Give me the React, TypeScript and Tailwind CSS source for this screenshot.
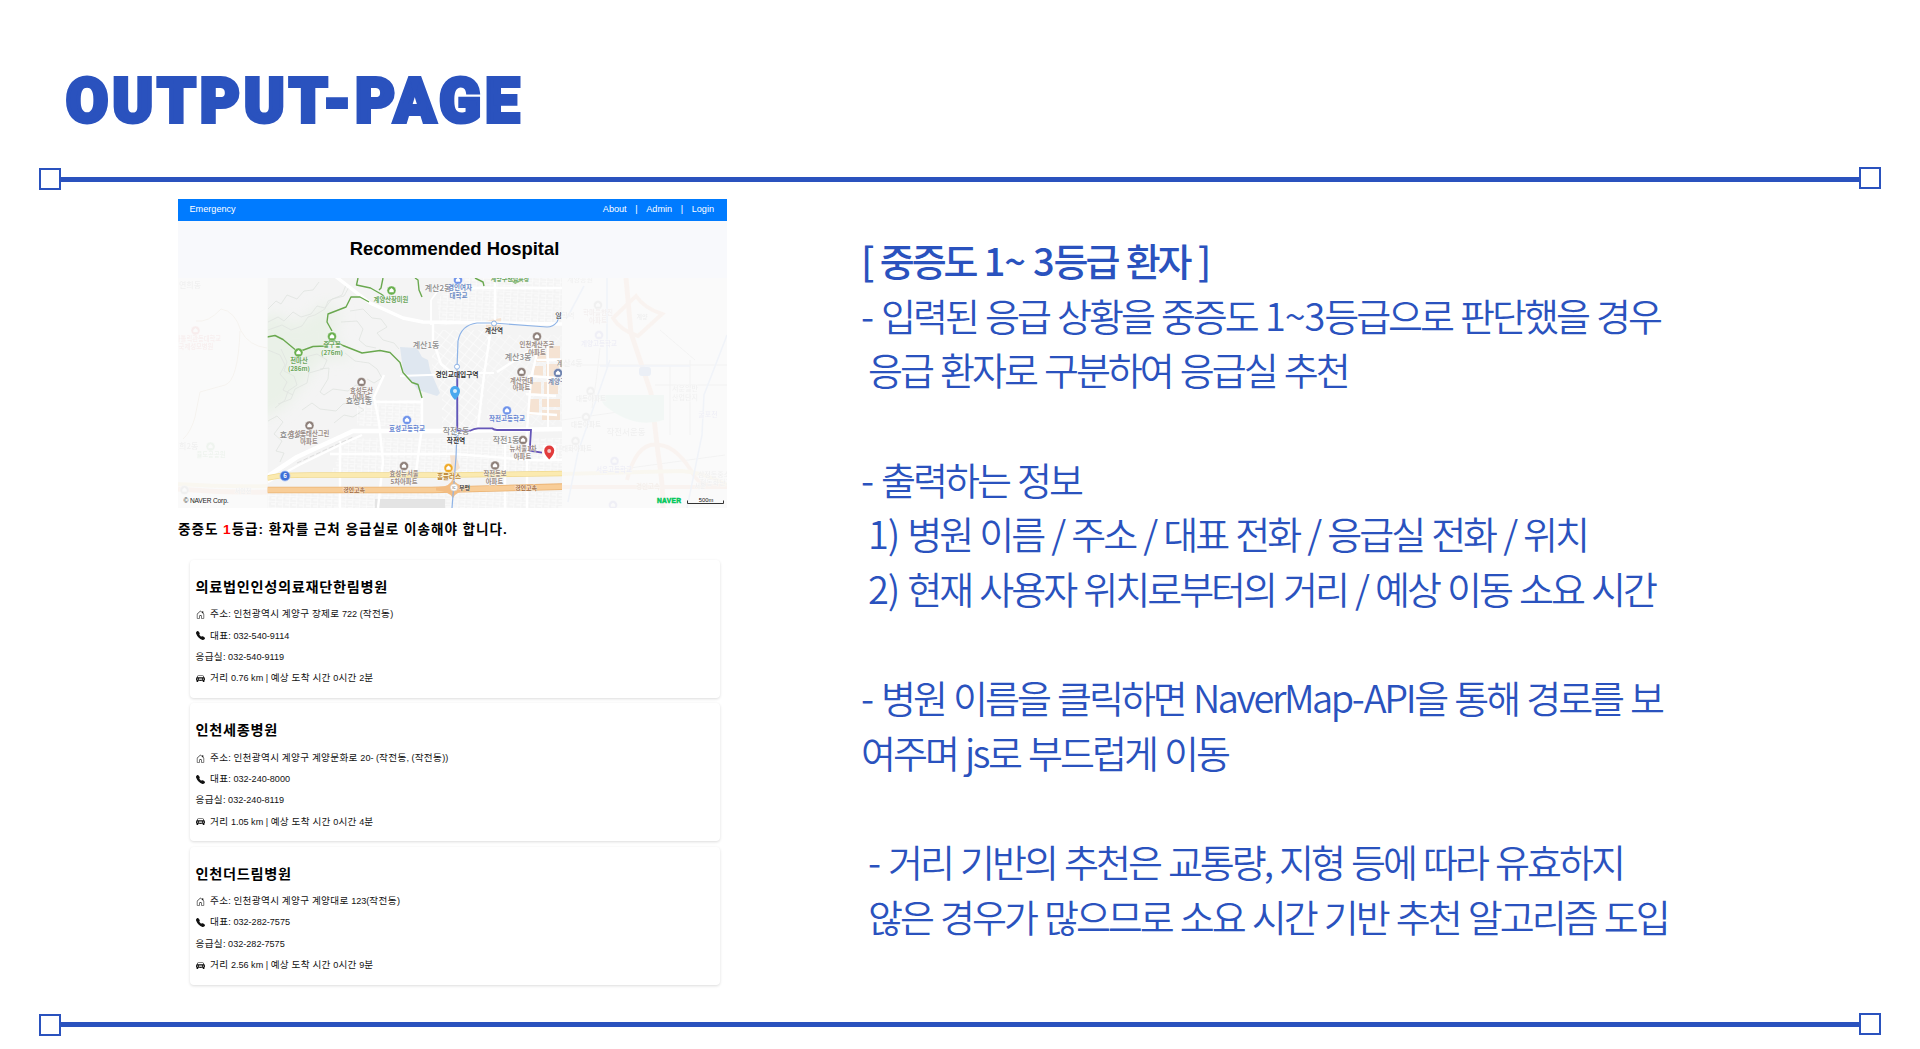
import { clsx } from "clsx";
import { BsCarFrontFill, BsHouseDoor, BsTelephoneFill } from "react-icons/bs";

const hospitals = [
  {
    name: "의료법인인성의료재단한림병원",
    address: "인천광역시 계양구 장제로 722 (작전동)",
    phone: "032-540-9114",
    emergency: "032-540-9119",
    distance: "0.76",
    minutes: 2,
  },
  {
    name: "인천세종병원",
    address: "인천광역시 계양구 계양문화로 20- (작전동, (작전동))",
    phone: "032-240-8000",
    emergency: "032-240-8119",
    distance: "1.05",
    minutes: 4,
  },
  {
    name: "인천더드림병원",
    address: "인천광역시 계양구 계양대로 123(작전동)",
    phone: "032-282-7575",
    emergency: "032-282-7575",
    distance: "2.56",
    minutes: 9,
  },
];

const notes = [
  { text: "[ 중증도 1~ 3등급 환자 ]", className: "font-medium" },
  { text: "- 입력된 응급 상황을 중증도 1~3등급으로 판단했을 경우", className: "" },
  { text: "응급 환자로 구분하여 응급실 추천", className: "pl-[7px]" },
  { text: "", className: "" },
  { text: "- 출력하는 정보", className: "" },
  { text: "1) 병원 이름 / 주소 / 대표 전화 / 응급실 전화 / 위치", className: "pl-[7px]" },
  { text: "2) 현재 사용자 위치로부터의 거리 / 예상 이동 소요 시간", className: "pl-[7px]" },
  { text: "", className: "" },
  { text: "- 병원 이름을 클릭하면 NaverMap-API을 통해 경로를 보", className: "" },
  { text: "여주며 js로 부드럽게 이동", className: "" },
  { text: "", className: "" },
  { text: "- 거리 기반의 추천은 교통량, 지형 등에 따라 유효하지", className: "pl-[7px]" },
  { text: "않은 경우가 많으므로 소요 시간 기반 추천 알고리즘 도입", className: "pl-[7px]" },
];

// [x, y, text, fill, size]
type Label = [number, number, string, string, number];

const labels: Label[] = [
  [391, 301.5, "계양산장미원", "#6aa55b", 6.3],
  [332, 347, "중구봉", "#6aa55b", 6.3],
  [332, 355, "(276m)", "#6aa55b", 6.3],
  [299, 363, "천마산", "#6aa55b", 6.3],
  [299, 371, "(286m)", "#6aa55b", 6.3],
  [510, 281, "계양구산림욕장", "#6aa55b", 6],
  [438, 291, "계산2동", "#8b8b8b", 8],
  [460, 290, "경인여자", "#6c8bc4", 6.5],
  [458.5, 298, "대학교", "#6c8bc4", 6.5],
  [426, 348, "계산1동", "#8b8b8b", 8],
  [494, 333, "계산역", "#444", 6.5],
  [558.5, 318, "임", "#444", 7],
  [537, 347, "인천계산주공", "#9a8c86", 6.3],
  [537, 355, "아파트", "#9a8c86", 6.3],
  [518, 360, "계산3동", "#8b8b8b", 8],
  [565, 366, "계산4", "#8b8b8b", 7],
  [457, 376.5, "경인교대입구역", "#333", 6.7],
  [521.5, 382.5, "계산현대", "#9a8c86", 6.3],
  [521.5, 390, "아파트", "#9a8c86", 6.3],
  [560, 384, "계양구청", "#7c8cae", 6.5],
  [361.5, 392.5, "효성두산", "#9a8c86", 6.3],
  [361.5, 400, "아파트", "#9a8c86", 6.3],
  [359, 404, "효성1동", "#8b8b8b", 8],
  [407, 430.5, "효성고등학교", "#6686d2", 6.5],
  [293, 438, "효성2동", "#8b8b8b", 8],
  [309, 436, "효성동태산그린", "#9a8c86", 6.3],
  [309, 443.5, "아파트", "#9a8c86", 6.3],
  [507, 421, "작전고등학교", "#6686d2", 6.5],
  [456, 433.5, "작전2동", "#8b8b8b", 8],
  [456, 443, "작전역", "#333", 6.7],
  [506, 442.5, "작전1동", "#8b8b8b", 8],
  [523, 450.5, "뉴서울1차", "#9a8c86", 6.3],
  [522.5, 458.5, "아파트", "#9a8c86", 6.3],
  [404, 476, "효성뉴서울", "#9a8c86", 6.3],
  [404, 484, "5차아파트", "#9a8c86", 6.3],
  [449, 478.5, "홈플러스", "#b98533", 6.5],
  [495, 476, "작전동보", "#9a8c86", 6.3],
  [494.5, 483.5, "아파트", "#9a8c86", 6.3],
  [354, 492, "경인고속", "#a0673a", 6],
  [526, 490, "경인고속", "#a0673a", 6],
  [464.5, 490, "부평", "#444", 6],
];

const fadedLabels: Label[] = [
  [190, 288, "연희동", "#777", 8],
  [198, 341, "가톨릭관동대학교", "#d66", 6.3],
  [196, 349, "국제성모병원", "#d66", 6.3],
  [185, 449, "연희2동", "#777", 8],
  [211, 457, "율도공공원", "#6a6", 6.3],
  [243, 493, "서인천", "#777", 6],
  [580, 282, "계양공원", "#777", 7],
  [568, 318, "학역", "#777", 7],
  [598, 315, "학마을한진", "#a77", 6.5],
  [598, 322.5, "아파트", "#a77", 6.5],
  [642, 319, "계양", "#777", 6],
  [599, 346, "계양고등학교", "#66c", 6.5],
  [573, 366, "산4동", "#777", 8],
  [591, 401, "대동아파트", "#777", 6.5],
  [586, 427, "대동아파트", "#777", 6.5],
  [577, 451, "태화아파트", "#777", 6.5],
  [626, 435, "작전서운동", "#777", 8.5],
  [614, 472, "서운고등학교", "#66c", 6.5],
  [685, 391, "서운일반", "#777", 7],
  [685, 399.5, "산업단지", "#777", 7],
  [708, 417, "굴포천", "#66c", 7],
  [714, 477, "삼정동중소", "#777", 7],
  [716, 485, "협동화단지", "#777", 7],
  [648, 489, "경인고속", "#a63", 6.5],
  [700, 488, "서운", "#777", 6],
];

// [x, y, color]
const markers: [number, number, string][] = [
  [391.5, 290.5, "#6ab04f"],
  [332, 336.5, "#6ab04f"],
  [298.5, 352.5, "#6ab04f"],
  [458, 280, "#6f93ea"],
  [537, 336.5, "#8e807a"],
  [521.5, 372, "#8e807a"],
  [558, 373, "#6c80ad"],
  [361.5, 382, "#8e807a"],
  [407, 420, "#6f93ea"],
  [309.5, 425.5, "#8e807a"],
  [507, 410.5, "#6f93ea"],
  [523, 440, "#8e807a"],
  [404, 466, "#8e807a"],
  [448.5, 468, "#efaa28"],
  [495, 465.5, "#8e807a"],
];

const fadedMarkers: [number, number, string][] = [
  [195.5, 330.5, "#d44"],
  [210.5, 446.5, "#6a6"],
  [184.5, 490, "#777"],
  [598, 305, "#777"],
  [599, 335, "#66c"],
  [590.5, 391, "#777"],
  [586, 417, "#777"],
  [575.5, 441, "#777"],
  [614.5, 461, "#66c"],
  [613, 505, "#66c"],
];

const contours = [
  "M268 309 l8 -8 5 3 6 -9 10 4 7 -8 9 -1 6 -8",
  "M268 322 l10 -5 6 4 9 -9 8 5 10 -3 6 -8 8 2 7 -9 12 -3 5 -9",
  "M268 330 l14 -5 9 5 11 -4 6 -9 7 -2 10 -6 3 -8 14 -6 4 -10",
  "M268 350 l12 5 5 10 -5 9 7 8 -4 8 10 5",
  "M281 349 l6 13 -3 9 10 5 3 9 -9 6 -3 9 -10 8",
  "M305 357 l12 -3 10 6 -4 9 -14 4 -2 10 -12 6 -4 10 -13 5",
  "M320 369 l9 -1 -1 11 -8 13 4 3 9 -6 15 2 8 -6 12 3",
  "M345 353 l10 8 14 2 8 6 5 9 -8 5 -7 -4",
  "M350 311 l13 -2 9 9 9 1 6 8 -10 6 6 7 11 3 5 6",
  "M302 410 l10 -7 8 6 16 2 7 -7 9 -2 12 8 -11 7 -9 -2 -10 8",
  "M268 421 l9 -5 6 6 -9 12 8 7 -6 10 8 2 -4 9",
  "M341 322 l16 -1 6 8 -4 11 7 6 10 2",
];

const SquareLine = ({ lineClassName = "mt-[10px]" }: { lineClassName?: string }) => (
  <div className="flex h-6 items-start pl-[39px]">
    <div className="mt-px size-[22px] border-2 border-[#2a52be]" />
    <div className={clsx("h-[5px] w-[1798px] bg-[#2a52be]", lineClassName)} />
    <div className="size-[22px] border-2 border-[#2a52be]" />
  </div>
);

// Hangul runs are set a little larger than the digits and latin beside them
const Mixed = ({ text }: { text: string }) => (
  <span>
    {text.split(/([가-힣]+)/).map((part, i) =>
      i % 2 ? (
        <span key={i} className="text-[9.6px] tracking-[0.35px]">
          {part}
        </span>
      ) : (
        part
      )
    )}
  </span>
);

// Digits and latin are spaced less tightly than the hangul
const Note = ({ text }: { text: string }) => (
  <>
    {text.split(/([0-9~)-]+|[A-Za-z]+)/).map((part, i) =>
      i % 2 ? (
        <span key={i} className={/[A-Za-z]/.test(part) ? "tracking-[-2.4px]" : "tracking-[-1.1px]"}>
          {part}
        </span>
      ) : (
        part
      )
    )}
  </>
);

const Marker = ({ x, y, color }: { x: number; y: number; color: string }) => (
  <g>
    <circle cx={x} cy={y} r="4.5" fill={color} stroke="#fff" strokeWidth="0.4" />
    <path d={`M${x - 2.2} ${y + 1.8}v-2.400l2.200-1.900 2.200 1.900v2.400z`} fill="#fff" />
  </g>
);

const MapLabels = ({ items }: { items: Label[] }) => (
  <g textAnchor="middle">
    {items.map(([x, y, text, fill, size]) => (
      <text
        key={`${x}-${y}`}
        x={x}
        y={y}
        fill={fill}
        fontSize={size}
        fontWeight={size < 7 ? 700 : 500}
        stroke="#fff"
        strokeOpacity="0.6"
        strokeWidth="0.8"
        paintOrder="stroke"
      >
        {text}
      </text>
    ))}
  </g>
);

const HospitalMap = () => (
  <svg
    viewBox="178 278 549 230"
    className="block h-[230px] w-[549px] font-['Noto_Sans_CJK_KR',sans-serif]"
  >
    <defs>
      <clipPath id="tile">
        <rect x="267.7" y="278" width="294.3" height="230" />
      </clipPath>
      <pattern id="blocks" width="7" height="6" patternUnits="userSpaceOnUse" patternTransform="rotate(3)">
        <path d="M0 0h7M0 0v6M3 3h4" stroke="#fff" strokeWidth="0.9" fill="none" />
      </pattern>
      <pattern id="slanted" width="8" height="7" patternUnits="userSpaceOnUse" patternTransform="rotate(38)">
        <path d="M0 0h8M0 0v7" stroke="#fff" strokeWidth="1.1" fill="none" />
      </pattern>
      <filter id="soft">
        <feGaussianBlur stdDeviation="7" />
      </filter>
    </defs>

    <rect x="178" y="278" width="549" height="230" fill="#fafafa" />

    {/* faded surroundings */}
    <g opacity="0.07" fill="none">
      <path d="M196 321q12 2 25-12 14 2 20 22 8 15 26 17M240 331q-2 50-15 54l-25 7-5 25q-4 15-12 22" stroke="#b96" strokeWidth="1" />
      <path d="M600 348q-3 30-8 60M562 365h168M670 365v70M690 360v75M655 385h72M615 470l110-15M660 330l35 30M562 420l70-10" stroke="#999" strokeWidth="1" />
      <path d="M626 278l5 55 20 60 7 60q5 30 5 55" stroke="#f2a878" strokeWidth="5" />
      <path d="M562 487h165M613 318l23-22q8 12 26 18l-24 22q-18-6-25-18zM627 480q10-40 33-35 18 2 35 32 8 12 32 8" stroke="#f2a878" strokeWidth="4" />
      <path d="M562 474l120-3q24 2 45 14M178 484q45 3 90 2" stroke="#efd27e" strokeWidth="4" />
      <path d="M178 489q45 4 90 3" stroke="#f2a878" strokeWidth="5" />
      <path d="M598 395h66v25q-30 10-60-15z" fill="#9db" />
      <path d="M567 318l17-32M727 335l-23 60-2 40-15 73M610 360l-32 92-10 50M607 278v90M600 366h90" stroke="#7aa3ea" strokeWidth="1.6" />
      <rect x="639" y="367" width="12" height="9" rx="3" fill="#36c" />
      {fadedMarkers.map(([x, y, color]) => (
        <Marker key={`${x}-${y}`} x={x} y={y} color={color} />
      ))}
      <MapLabels items={fadedLabels} />
    </g>

    <g clipPath="url(#tile)">
      <rect x="267" y="278" width="296" height="230" fill="#f4f4f4" />
      <path
        d="M255 320l20 -6 22 10 30 -22 14 12 -8 22 20 22 -34 2 -14 22 -22 26 -28 12z"
        fill="#eaf1e8"
        filter="url(#soft)"
      />
      <g stroke="#dfe3df" strokeWidth="0.8" fill="none" strokeLinejoin="round">
        {contours.map((d) => (
          <path key={d} d={d} />
        ))}
      </g>
      <path d="M400 347l17 1 5 9 6 3 2 10 10 23 -3 3 -19 -6 -15 -20z" fill="#dfe7f0" />

      {/* city blocks */}
      <path d="M437 300l20 -22h105v45h-100l-22 3z" fill="url(#blocks)" />
      <path d="M432 330h60l-6 45 -6 52h-38v-30l-10 -30z" fill="url(#slanted)" />
      <path d="M357 400h65v26h-65z" fill="url(#blocks)" />
      <path d="M345 438h217v34h-230z" fill="url(#blocks)" />
      <path d="M268 492h294v16h-294z" fill="url(#blocks)" />
      <path d="M487 335h75v90h-75z" fill="url(#slanted)" opacity="0.6" />
      <path d="M375 499h70v9h-70z" fill="#e4e4e4" />

      <g fill="#f5e3d3">
        <path d="M486 321l15 -3v10h-15zM536 352h10v10h-10zM547 346h13v12h-13zM534 366h9v12h-9zM546 364h13v14h-13zM531 382h10v13h-10zM544 382h14v12h-14zM529 399h10v16h-10zM542 399h18v8h-18zM542 410h18v10h-18zM450 455l6 0 4 13 -8 6z" />
      </g>

      {/* streets */}
      <g stroke="#fff" fill="none" strokeLinejoin="round">
        <path d="M335 276l35 27 33 15 20 4 70 1 69 1" strokeWidth="3.4" />
        <path d="M268 476l29 -19 56 -26h100l109 -2" strokeWidth="4.6" />
        <path d="M268 482l31 -17 41 -20 22 -10" strokeWidth="2" />
        <path d="M384 375l-10 22 5 25 4 40 -5 46M422 397v30l-6 45M375 402h48M340 441v67M330 454h125l75 6h32M433 322v18l8 24 12 10M495 278v42M490 335l-6 40 -6 52" strokeWidth="2.4" />
        <path d="M538 350l-7 28 -4 52v78M561 360l-24 0M558 378l-30 -2M556 396l-30 -2M557 415l-30 -2M497 372l40 -26M505 440v68M440 288h122" strokeWidth="2.4" />
        <path d="M456 373h38M400 376l56 -2M431 300v25M437 292l-6 8M548 342v85" strokeWidth="1.8" />
      </g>
      <path d="M297 463l56 -26" stroke="#dedede" strokeWidth="1" strokeDasharray="5 2" />

      <path d="M267 478l14 -2.5 30 -0.5h140l112 -1.5" stroke="#f0d98f" strokeWidth="5.4" fill="none" />
      <path d="M267 478l14 -2.5 30 -0.5h140l112 -1.5" stroke="#fbeab0" strokeWidth="4" fill="none" />
      <path d="M267 490h165l131 -3.4" stroke="#eab273" strokeWidth="6.6" fill="none" />
      <path d="M267 490h165l131 -3.4" stroke="#f8cd98" strokeWidth="5" fill="none" />
      <path d="M436 487q14 1 17 -9 3 9 17 8.500v3.500q-14 1-17 8-4-7-17-7.500z" fill="#f3bd83" />

      {/* hiking trails */}
      <g stroke="#6aa84f" strokeWidth="1.4" fill="none" strokeLinejoin="round">
        <path d="M267 337l8 -1.500 8 4 15 12.500 15 -5.500 14 -0.500 5 -10" />
        <path d="M332 331l-5 -9 1 -8 18 -7 5 -10 9 0 9 5" />
        <path d="M333 340l10 5.500 19 7.500 18 -2.500 10 2 10 10 3 10 9 10 6 2 4 13.500" />
        <path d="M358 278l-1.500 7 14 3 10.500 6 3 2M383 278l-2 10 -2 2" />
        <path d="M415 278l3 2 1 10 3 7M475 278l8 4 1 4M508 278l7 5 7 -3" />
      </g>

      {/* subway */}
      <path
        d="M561 313l-4 9q-4 5-10 5l-54 -4h-16q-16 2-19 18l-1 27v63l-1 26 -4 51"
        stroke="#8eb3e6"
        strokeWidth="1.2"
        fill="none"
      />
      <path
        d="M457.300 372v58.700h12.700q4 -2 8 -2.400h14q2 1.700 5 1.700h34l-1.300 20.700 12.300 2"
        stroke="#6556b8"
        strokeWidth="1.8"
        fill="none"
      />
      <g fill="#fff" stroke="#8eb3e6" strokeWidth="1">
        <circle cx="494" cy="323.500" r="2.500" />
        <circle cx="457" cy="366.700" r="2.500" />
        <circle cx="456.500" cy="433.500" r="2.500" />
      </g>

      {markers.map(([x, y, color]) => (
        <Marker key={`${x}-${y}`} x={x} y={y} color={color} />
      ))}
      <MapLabels items={labels} />
      <circle cx="285" cy="476" r="5" fill="#3f6fd8" stroke="#a9c1f3" strokeWidth="0.8" />
      <text x="285" y="478.200" fontSize="6" fontWeight="700" fill="#fff" textAnchor="middle">
        6
      </text>
      <circle cx="454" cy="487.500" r="3.600" fill="#fff" stroke="#ccc" strokeWidth="0.600" />
      <text x="454" y="489" fontSize="4" fill="#555" textAnchor="middle">
        IC
      </text>

      <path d="M455 400q-5 -5 -5 -9a5 5 0 0 1 10 0q0 4 -5 9z" fill="#4aa8ee" />
      <circle cx="455" cy="391" r="2" fill="#d5ebfb" />
      <rect x="543" y="445" width="13" height="16" fill="#fff" />
      <path d="M549.200 459.500q-5 -5 -5 -9a5 5 0 0 1 10 0q0 4 -5 9z" fill="#e23b3b" />
      <circle cx="549.200" cy="451" r="2" fill="#f3cccc" />
    </g>

    <g fontFamily="Liberation Sans, sans-serif">
      <text x="183.500" y="503.300" fontSize="6.600" fill="#222" textLength="45">
        © NAVER Corp.
      </text>
      <text x="657" y="503.400" fontSize="6.600" fontWeight="700" fill="#03c75a" stroke="#03c75a" strokeWidth="0.500" textLength="24">
        NAVER
      </text>
      <text x="706" y="501.500" fontSize="5.800" fill="#111" textAnchor="middle">
        500m
      </text>
    </g>
    <path d="M687.500 500.500v3h36v-3" stroke="#333" strokeWidth="1" fill="none" />
  </svg>
);

const HospitalCard = ({ hospital }: { hospital: (typeof hospitals)[number] }) => (
  <div className="flex h-[138px] w-[530px] flex-col rounded bg-white px-[5.5px] pt-[17px] text-[9.1px] text-[#111] shadow-[0_1px_3px_rgba(0,0,0,0.14)]">
    <h2 className="mb-[7px] h-5 text-[14.2px] leading-5 font-bold tracking-[0.7px] text-black">{hospital.name}</h2>
    <div className="flex h-[21.3px] items-center gap-[5.5px]">
      <BsHouseDoor className="size-[9px]" />
      <Mixed text={`주소: ${hospital.address}`} />
    </div>
    <div className="flex h-[21.3px] items-center gap-[5.5px]">
      <BsTelephoneFill className="size-[9px]" />
      <Mixed text={`대표: ${hospital.phone}`} />
    </div>
    <div className="flex h-[21.3px] items-center">
      <Mixed text={`응급실: ${hospital.emergency}`} />
    </div>
    <div className="flex h-[21.3px] items-center gap-[5.5px]">
      <BsCarFrontFill className="size-[9px]" />
      <Mixed text={`거리 ${hospital.distance} km | 예상 도착 시간 0시간 ${hospital.minutes}분`} />
    </div>
  </div>
);

const App = () => {
  return (
    <div className="flex h-[1049px] w-[1920px] flex-col overflow-hidden bg-white">
      <header className="h-[167px] pt-[64px] pl-[66px]">
        <h1 className="font-[Roboto,sans-serif] text-[61px] leading-[74px] font-black tracking-[4.3px] whitespace-nowrap text-[#2a52be] [-webkit-text-stroke:4px_#2a52be]">
          OUTPUT-PAGE
        </h1>
      </header>

      <SquareLine />

      <main className="flex h-[822px] pt-2 pl-[178px]">
        <section className="w-[549px] font-['Liberation_Sans','Noto_Sans_CJK_KR',sans-serif]">
          <nav className="flex h-[22px] items-center justify-between bg-[#007bff] pr-[13px] pl-[11.5px] text-[9.15px] text-white">
            <span>Emergency</span>
            <div className="flex gap-[8.6px]">
              <span>About</span>
              <span>|</span>
              <span>Admin</span>
              <span>|</span>
              <span>Login</span>
            </div>
          </nav>
          <div className="flex h-[57px] items-center justify-center bg-[#f8f9fc] pb-0.5 pl-1">
            <h2 className="text-[18.4px] leading-5 font-bold text-black">Recommended Hospital</h2>
          </div>
          <HospitalMap />
          <p className="h-[52px] pt-3 text-[13.6px] leading-5 font-bold tracking-[0.95px] whitespace-nowrap text-black">
            중증도 <span className="text-[#f00]">1</span>등급: 환자를 근처 응급실로 이송해야 합니다.
          </p>
          <div className="flex flex-col gap-[5.4px] pl-3">
            {hospitals.map((hospital) => (
              <HospitalCard key={hospital.name} hospital={hospital} />
            ))}
          </div>
        </section>

        <section className="pt-[34px] pl-[134px] font-['Noto_Sans_CJK_KR',sans-serif] text-[38px] leading-[54.67px] font-[350] tracking-[-3px] text-[#2a52be] [word-spacing:2.6px]">
          {notes.map((note, i) => (
            <p key={i} className={clsx("h-[54.67px] whitespace-nowrap", note.className)}>
              <Note text={note.text} />
            </p>
          ))}
        </section>
      </main>

      <SquareLine lineClassName="mt-[9px]" />
    </div>
  );
};

export default App;
